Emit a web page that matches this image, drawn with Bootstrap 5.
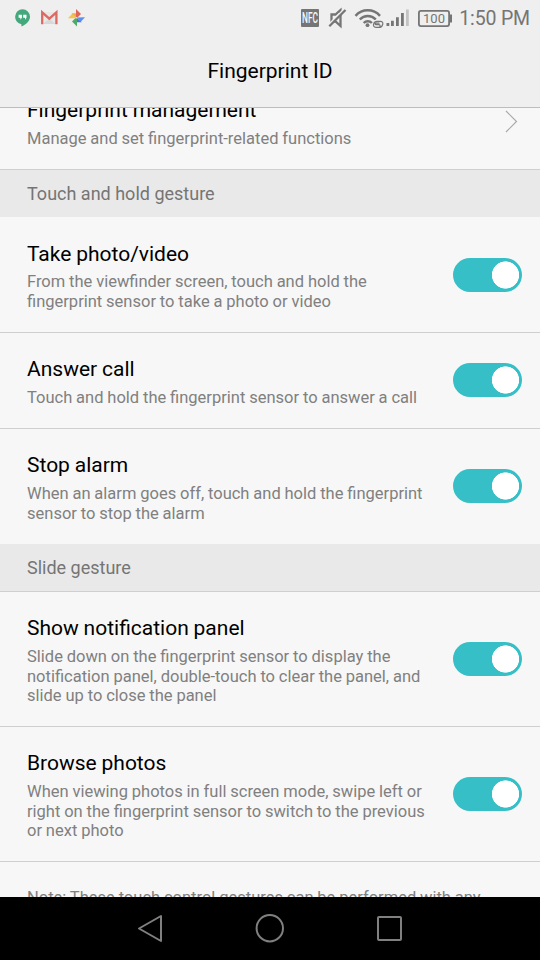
<!DOCTYPE html>
<html lang="en">
<head>
<meta charset="utf-8">
<meta name="viewport" content="width=device-width, initial-scale=1">
<title>Fingerprint ID</title>
<link rel="stylesheet" href="https://cdn.jsdelivr.net/npm/bootstrap@5.3.0/dist/css/bootstrap.min.css">
<style>
body{font-family:Roboto,"Liberation Sans",sans-serif;background:#f7f7f7;color:#000}
.screen{width:540px;height:960px}
.status-bar{height:36px;background:#efefef;color:#757575}
.status-bar svg,.nav-keys svg{display:block}
.clock{font-size:19.5px;line-height:37px;letter-spacing:-.15px;padding-right:10px}
.title-bar{height:72px;background:#efefef;border-bottom:1px solid #bdbdbd}
.title-bar h1{font-size:21px;line-height:25px;margin:0;font-weight:400;word-spacing:-.5px}
.content{min-height:0}
.item{border:0;border-bottom:1px solid #cfcfcf;border-radius:0;background:#f7f7f7;padding:24px 18px 0 27px;color:#000}
.item h2{font-size:21px;line-height:25px;margin:0 0 6px;font-weight:400;word-spacing:-.4px}
.item .title-low{margin:1px 0 5px}
.item p{font-size:16.5px;line-height:19.5px;margin:0;color:#808080;white-space:nowrap;word-spacing:-.25px}
.one-line{height:96px}.two-line{height:116px}.three-line{height:135px}
.last-item{height:115px;border-bottom:0}
.first-item{height:96px;margin-top:-34px}
.section-head{height:47px;background:#e9e9e9;color:#757575;font-size:18px;line-height:48px;padding:0 27px}
.ruled-head{height:48px;border-bottom:1px solid #cfcfcf}
.item .form-check-input{width:69px;height:34px;margin:0 0 1px;border:0;border-radius:17px;background-color:#36bfc6;background-size:34px 34px;box-shadow:none;background-image:radial-gradient(circle at 17.5px 17px,#fff 13.3px,rgba(255,255,255,0) 13.9px);background-repeat:no-repeat;background-position:right 0 center}
.toggle-wrap{margin-top:-24px}
.toggle-low{margin-top:-22px}
.chevron{margin-top:4px}
.nav-keys{height:63px;background:#000}
.note{padding:26px 27px 0;font-size:16.5px;line-height:19.5px;word-spacing:-.25px;color:#808080;height:35px}
</style>
</head>
<body>
<div class="screen d-flex flex-column overflow-hidden">
  <header class="status-bar flex-shrink-0 d-flex">
    <svg width="452" height="36" viewBox="0 0 452 36" fill="none" aria-hidden="true">
      <path d="M22.500 9.300a7.500 7.500 0 0 0-1.100 14.900v2.400c4.700-1.900 8.600-5.400 8.600-9.800a7.500 7.500 0 0 0-7.500-7.500z" fill="#43a87c"/>
      <path d="M18.600 14.700h3.300v3.100l-1.500 2v-2h-1.800zM23.200 14.700h3.300v3.100l-1.500 2v-2h-1.800z" fill="#fff"/>
      <path d="M41 12h16.500v12H41z" fill="#e9e8e8"/><path d="M43 24l6.300-5.500L55.500 24z" fill="#d8d8d8"/>
      <path d="M42.200 24.200V12.300l7.100 6.300 7.100-6.300v11.900" stroke="#dc6a61" stroke-width="2.300"/>
      <path d="M76 9l5 5-3.500 3.500-1.500-.5z" fill="#df6459"/>
      <path d="M85 17.200l-4.200 4.600-3.800-4.300z" fill="#5b8fee"/>
      <path d="M77 26.500l-5-5 3.500-3.500 1.500.5z" fill="#4cab68"/>
      <path d="M68 18.300l4.500-4.800 3.800 4.800z" fill="#f1c34f"/>
      <path d="M71.500 13.200H76v4.300z" fill="#ecae3f"/><path d="M77 18l4.800 4.300H77z" fill="#4a74cf"/>
      <rect x="301" y="9" width="18" height="18" rx="1" fill="#757575"/>
      <text x="310" y="23.200" text-anchor="middle" textLength="16" lengthAdjust="spacingAndGlyphs" font-size="14.500" font-weight="500" fill="#f8f8f8">NFC</text>
      <path d="M331.500 14.500h4l5-4.500v16l-5-4.500h-4z" stroke="#757575" stroke-width="2.300"/>
      <path d="M344.500 9L328 25.500" stroke="#efefef" stroke-width="2"/>
      <path d="M345.500 10L329.300 26.200" stroke="#757575" stroke-width="2.300"/>
      <g stroke="#757575" stroke-width="2.500"><path d="M355.500 15.800c6.700-7.300 17.800-7.300 24.500 0M359.800 19.500c4.500-4.700 11.500-4.700 16 0M363.700 23c2.300-2.400 5.900-2.400 8.200 0"/></g>
      <circle cx="367.500" cy="25.200" r="1.900" fill="#757575"/>
      <path d="M375 22h6v4h-6z" stroke="#efefef" stroke-width="4" fill="#efefef"/>
      <g stroke="#757575" stroke-width="1.200"><path d="M379.500 23.200h-3.200c-1.500 0-1.500 1.500 0 1.500h2.700c1.500 0 1.500 2.600 0 2.600h-3c-2.200 0-3-1.800-2.300-3.600.5-1.600 1.800-2.400 3.300-2.400h3.300c2.200 0 2.900 1.500 2.400 3.200-.4 1.500-1.300 2.500-2.500 2.800"/></g>
      <path d="M386.500 23h2.800v3h-2.800zM391 20.800h2.800V26H391zM396 17.200h2.800V26H396zM401 13h2.800v13H401z" fill="#757575"/>
      <path d="M406 9.500h2.800V26H406z" fill="#c3c3c3"/>
      <rect x="418.900" y="10.900" width="30.200" height="15.200" rx="2" stroke="#757575" stroke-width="1.800"/>
      <path d="M450 14.500h2v8h-2z" fill="#757575"/>
      <text x="434" y="23.300" text-anchor="middle" font-size="13" letter-spacing=".1" fill="#757575">100</text>
    </svg>
    <span class="clock text-nowrap ms-auto">1:50 PM</span>
  </header>
  <div class="title-bar flex-shrink-0 d-flex align-items-center justify-content-center"><h1>Fingerprint ID</h1></div>
  <main class="content flex-grow-1 overflow-hidden">
    <div class="item first-item d-flex justify-content-between">
      <div><h2>Fingerprint management</h2><p>Manage and set fingerprint-related functions</p></div>
      <svg class="chevron" width="20" height="40" viewBox="0 0 20 40" fill="none" aria-hidden="true"><path d="M4 9l10.500 10.500L4 30" stroke="#a9a9a9" stroke-width="1.200"/></svg>
    </div>
    <div class="section-head">Touch and hold gesture</div>
    <div class="item two-line d-flex justify-content-between">
      <div><h2 class="title-low">Take photo/video</h2><p>From the viewfinder screen, touch and hold the<br>fingerprint sensor to take a photo or video</p></div>
      <div class="toggle-wrap toggle-low d-flex align-items-center"><input class="form-check-input" type="checkbox" role="switch" aria-label="Take photo/video" checked></div>
    </div>
    <div class="item one-line d-flex justify-content-between">
      <div><h2>Answer call</h2><p>Touch and hold the fingerprint sensor to answer a call</p></div>
      <div class="toggle-wrap d-flex align-items-center"><input class="form-check-input" type="checkbox" role="switch" aria-label="Answer call" checked></div>
    </div>
    <div class="item last-item d-flex justify-content-between">
      <div><h2>Stop alarm</h2><p>When an alarm goes off, touch and hold the fingerprint<br>sensor to stop the alarm</p></div>
      <div class="toggle-wrap d-flex align-items-center"><input class="form-check-input" type="checkbox" role="switch" aria-label="Stop alarm" checked></div>
    </div>
    <div class="section-head ruled-head">Slide gesture</div>
    <div class="item three-line d-flex justify-content-between">
      <div><h2>Show notification panel</h2><p>Slide down on the fingerprint sensor to display the<br>notification panel, double-touch to clear the panel, and<br>slide up to close the panel</p></div>
      <div class="toggle-wrap d-flex align-items-center"><input class="form-check-input" type="checkbox" role="switch" aria-label="Show notification panel" checked></div>
    </div>
    <div class="item three-line d-flex justify-content-between">
      <div><h2>Browse photos</h2><p>When viewing photos in full screen mode, swipe left or<br>right on the fingerprint sensor to switch to the previous<br>or next photo</p></div>
      <div class="toggle-wrap d-flex align-items-center"><input class="form-check-input" type="checkbox" role="switch" aria-label="Browse photos" checked></div>
    </div>
    <div class="note text-nowrap">Note: These touch control gestures can be performed with any</div>
  </main>
  <footer class="nav-keys flex-shrink-0">
    <svg width="540" height="63" viewBox="0 0 540 63" fill="none" stroke="#808080" stroke-width="2" stroke-linejoin="round" aria-hidden="true">
      <path d="M161 19v25L139 31.500z"/><circle cx="269.800" cy="31.200" r="13.200"/><rect x="378" y="20" width="23" height="23" rx="1"/>
    </svg>
  </footer>
</div>
<script src="https://cdn.jsdelivr.net/npm/bootstrap@5.3.0/dist/js/bootstrap.bundle.min.js"></script>
</body>
</html>
